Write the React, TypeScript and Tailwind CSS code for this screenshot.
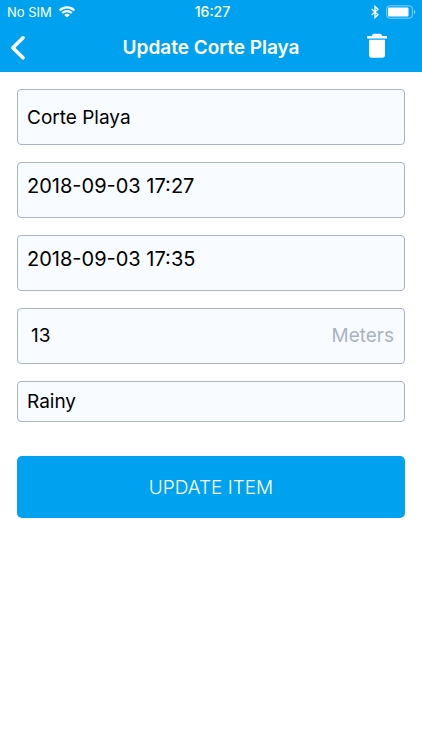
import { useState, type ReactNode } from 'react'

const inputClass = 'w-full min-w-0 bg-transparent leading-6 text-black outline-none'

// ── Status bar ───────────────────────────────────────────────────────────────
function StatusBar() {
  return (
    <div className="grid h-6 grid-cols-3 items-center pl-[7px] pr-1 text-[13px] leading-4">
      <div className="flex items-center gap-[7px]">
        <span>No SIM</span>
        <svg viewBox="0 0 16 12" className="h-3 w-4" fill="none" stroke="currentColor" strokeWidth="2.1">
          <path d="M0.7 4.4 C4.8 0.4 11.2 0.4 15.3 4.4" />
          <path d="M3.2 7.1 C5.9 4.5 10.1 4.5 12.8 7.1" />
          <path d="M8 11.6 L5.2 8.9 C6.8 7.5 9.2 7.5 10.8 8.9 Z" fill="currentColor" stroke="none" />
        </svg>
      </div>
      <span className="text-center text-sm leading-4 font-medium">16:27</span>
      <div className="flex items-center justify-end gap-[7px]">
        <svg viewBox="0 0 8 14" className="h-3.5 w-2" fill="none" stroke="currentColor" strokeWidth="1.3">
          <path d="M0.6 4 L7 9.8 L4 12.6 V1.4 L7 4.2 L0.6 10" />
        </svg>
        <svg viewBox="0 0 32 14" className="h-3.5 w-8">
          <rect x="0.6" y="0.8" width="25.8" height="12.4" rx="3" fill="none" stroke="currentColor" strokeOpacity="0.5" />
          <rect x="2" y="2.5" width="20.5" height="9" rx="1" fill="currentColor" />
          <path d="M28 5 C29.7 5.6 29.7 8.4 28 9 Z" fill="currentColor" fillOpacity="0.6" />
        </svg>
      </div>
    </div>
  )
}

// ── Navigation header ────────────────────────────────────────────────────────
function NavBar({ title }: { title: string }) {
  return (
    <div className="grid h-12 grid-cols-[64px_1fr_64px] items-center">
      <button type="button" aria-label="Back" className="flex h-full items-center pl-2.5">
        <svg viewBox="0 0 16 26" className="h-[26px] w-4" fill="none" stroke="currentColor" strokeWidth="3.6" strokeLinecap="round" strokeLinejoin="round">
          <path d="M13 2.8 L2.8 12.8 L13 22.8" />
        </svg>
      </button>
      <h1 className="text-center text-[19px] leading-6 font-semibold">{title}</h1>
      <button type="button" aria-label="Delete" className="flex h-full items-center pb-1 pl-2">
        <svg viewBox="0 0 22 26" className="h-[26px] w-[22px]" fill="currentColor">
          <path d="M1 3 H5.8 C6.2 1.6 7 0.8 8.2 0.8 H13.8 C15 0.8 15.8 1.6 16.2 3 H21 V5.4 H1 Z" />
          <path d="M3 6.8 H19 V21.8 C19 23.8 18.2 24.8 16.2 24.8 H5.8 C3.8 24.8 3 23.8 3 21.8 Z" />
        </svg>
      </button>
    </div>
  )
}

function Field({ className, children }: { className: string; children: ReactNode }) {
  return (
    <div className={`flex items-center rounded border border-[#a9b4c4] bg-[#f8fbff] px-[9px] ${className}`}>
      {children}
    </div>
  )
}

export default function App() {
  const [name, setName] = useState('Corte Playa')
  const [start, setStart] = useState('2018-09-03 17:27')
  const [end, setEnd] = useState('2018-09-03 17:35')
  const [distance, setDistance] = useState('13')
  const [notes, setNotes] = useState('Rainy')

  return (
    <div className="min-h-screen bg-white font-['Inter',sans-serif]">
      <header className="bg-[#00a2f0] text-white">
        <StatusBar />
        <NavBar title="Update Corte Playa" />
      </header>

      <form
        className="flex flex-col gap-[17px] p-[17px]"
        onSubmit={(e) => e.preventDefault()}
      >
        <Field className="h-14 pt-0.5 text-[19px]">
          <input aria-label="Name" className={inputClass} value={name} onChange={(e) => setName(e.target.value)} />
        </Field>
        <Field className="h-14 pb-2 text-xl">
          <input aria-label="Start time" className={inputClass} value={start} onChange={(e) => setStart(e.target.value)} />
        </Field>
        <Field className="h-14 pb-2 text-xl">
          <input aria-label="End time" className={inputClass} value={end} onChange={(e) => setEnd(e.target.value)} />
        </Field>
        <Field className="h-14 text-[19px]">
          <input
            id="distance"
            inputMode="numeric"
            className={`${inputClass} pl-1`}
            value={distance}
            onChange={(e) => setDistance(e.target.value)}
          />
          <label htmlFor="distance" className="pr-px leading-6 text-[#a9b4c4]">Meters</label>
        </Field>
        <Field className="h-[41px] text-[19px]">
          <input aria-label="Notes" className={inputClass} value={notes} onChange={(e) => setNotes(e.target.value)} />
        </Field>

        <button
          type="submit"
          className="mt-[17px] h-[62px] rounded-[5px] bg-[#00a2f0] pt-0.5 text-[19px] font-light text-white"
        >
          UPDATE ITEM
        </button>
      </form>
    </div>
  )
}
